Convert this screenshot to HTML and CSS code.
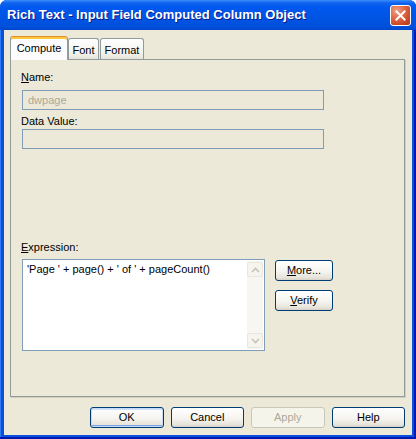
FILE: index.html
```html
<!DOCTYPE html>
<html lang="en">
<head>
    <meta charset="UTF-8">
    <title>Rich Text - Input Field Computed Column Object</title>
    <link rel="stylesheet" href="styles.css">
</head>
<body>
<div class="window">
    <div class="titlebar">
        <span class="title">Rich Text - Input Field Computed Column Object</span>
        <span class="close">
            <svg width="11" height="11" viewBox="0 0 11 11"><path d="M1.5 1.5 L9.5 9.5 M9.5 1.5 L1.5 9.5" stroke="#fff" stroke-width="2" stroke-linecap="square"/></svg>
        </span>
    </div>

    <div class="client">
        <div class="tabs">
            <div class="tab active">Compute</div>
            <div class="tab tab-font">Font</div>
            <div class="tab tab-format">Format</div>
        </div>

        <div class="panel">
            <div class="label label-name"><u>N</u>ame:</div>
            <div class="field disabled">dwpage</div>

            <div class="label label-data">Data Value:</div>
            <div class="field disabled"></div>

            <div class="label label-expr"><u>E</u>xpression:</div>
            <div class="expr-row">
                <div class="expr-box">
                    <div class="expr-text">'Page ' + page() + ' of ' + pageCount()</div>
                    <div class="scroll">
                        <span class="scroll-btn">
                            <svg width="9" height="6" viewBox="0 0 9 6"><path d="M1 5 L4.5 1.5 L8 5" fill="none" stroke="#C6C3B4" stroke-width="1.6"/></svg>
                        </span>
                        <span class="scroll-btn">
                            <svg width="9" height="6" viewBox="0 0 9 6"><path d="M1 1 L4.5 4.5 L8 1" fill="none" stroke="#C6C3B4" stroke-width="1.6"/></svg>
                        </span>
                    </div>
                </div>
                <div class="side-buttons">
                    <button class="btn btn-small"><u>M</u>ore...</button>
                    <button class="btn btn-small"><u>V</u>erify</button>
                </div>
            </div>
        </div>

        <div class="footer">
            <button class="btn default">OK</button>
            <button class="btn">Cancel</button>
            <button class="btn" disabled>Apply</button>
            <button class="btn">Help</button>
        </div>
    </div>
</div>
</body>
</html>
```

FILE: styles.css
```css
* {box-sizing: border-box;}
body {margin: 0; background: #fff; font: 11px/13px "Liberation Sans", Arial, sans-serif; color: #000;}

.window {width: 416px; height: 439px; display: flex; flex-direction: column; border-radius: 7px 7px 0 0; overflow: hidden;
    background: #0A50DC; box-shadow: inset -2px -2px 0 #0019B0, inset 1px 0 0 #2E7BF4;}

.titlebar {height: 30px; flex: none; display: flex; align-items: center; padding: 0 5px 0 7px; color: #fff;
    background: linear-gradient(#3C8FFB 0%, #0F62EE 10%, #0058EE 25%, #0054E3 60%, #0050DB 90%, #0046C8 100%);}
.title {flex: 1; font: bold 13px/16px "Liberation Sans", Arial, sans-serif; text-shadow: 1px 1px 0 #0A1A8C;}
.close {width: 21px; height: 21px; margin-top: 1px; display: flex; align-items: center; justify-content: center; border: 1px solid #fff; border-radius: 3px;
    background: radial-gradient(circle at 30% 25%, #F0A088 0%, #E2704F 35%, #CC4A2A 70%, #B4391C 100%);}

.client {flex: 1; margin: 0 4px 4px; background: #ECE9D8; padding: 6px 7px 0 6px; display: flex; flex-direction: column;}

/* tab strip */
.tabs {height: 23px; flex: none; display: flex; align-items: flex-end;}
.tab {height: 21px; padding-top: 5px; text-align: center; border: 1px solid #919B9C; border-bottom: none; border-radius: 3px 3px 0 0;
    background: linear-gradient(#FFFFFF, #F3F2EC 70%, #E6E4DA);}
.tab.active {width: 58px; height: 24px; margin-bottom: -1px; padding-top: 5px; position: relative; z-index: 1; background: #FCFCFE;
    border-top: 1px solid #E68B2C; box-shadow: inset 0 2px 0 #FFC73C;}
.tab-font {width: 31px;}
.tab-format {width: 44px; margin-left: 1px;}

.panel {height: 338px; flex: none; border: 1px solid #919B9C; padding: 11px 0 0 10px; box-shadow: 1px 1px 0 #D2CFC1;}

.label {height: 13px;}
.label-name {margin-bottom: 6px;}
.label-data {margin-top: 5px; margin-bottom: 1px;}
.label-expr {margin-top: 92px; margin-bottom: 5px;}

.field {width: 302px; height: 20px; margin-left: 1px; border: 1px solid #7F9DB9; padding: 3px 5px;}
.field.disabled {background: #ECE9D8; color: #ACA899;}

.expr-row {display: flex; align-items: flex-start; margin-left: 1px;}
.expr-box {width: 243px; height: 92px; border: 1px solid #7F9DB9; background: #fff; display: flex;}
.expr-text {flex: 1; padding: 3px 4px; white-space: nowrap; overflow: hidden;}
.scroll {width: 16px; margin: 1px 1px 1px 0; padding: 1px 0; display: flex; flex-direction: column; justify-content: space-between; background: #F7F6F1;}
.scroll-btn {height: 15px; display: flex; align-items: center; justify-content: center; border: 1px solid #E9E7DD; border-radius: 2px; background: #F5F4EE;}

.side-buttons {margin-left: 10px; margin-top: 1px; display: flex; flex-direction: column; gap: 9px;}

.btn {width: 74px; height: 21px; padding: 0; font: 11px/13px "Liberation Sans", Arial, sans-serif; color: #000; border: 1px solid #003C74; border-radius: 3px;
    background: linear-gradient(#FFFFFF, #F5F4EF 55%, #E6E3D9 88%, #D6D0C5);}
.btn-small {width: 58px;}
.btn.default {box-shadow: inset 0 0 0 1px #C6DAF8, inset 0 -2px 0 #7FA2E6, inset 0 2px 0 #CEE1FD;}
.btn:disabled {border-color: #C9C7BA; color: #ACA899; background: #F5F4EA;}

.footer {margin-top: 10px; padding-left: 80px; display: flex; gap: 7px;}
```
